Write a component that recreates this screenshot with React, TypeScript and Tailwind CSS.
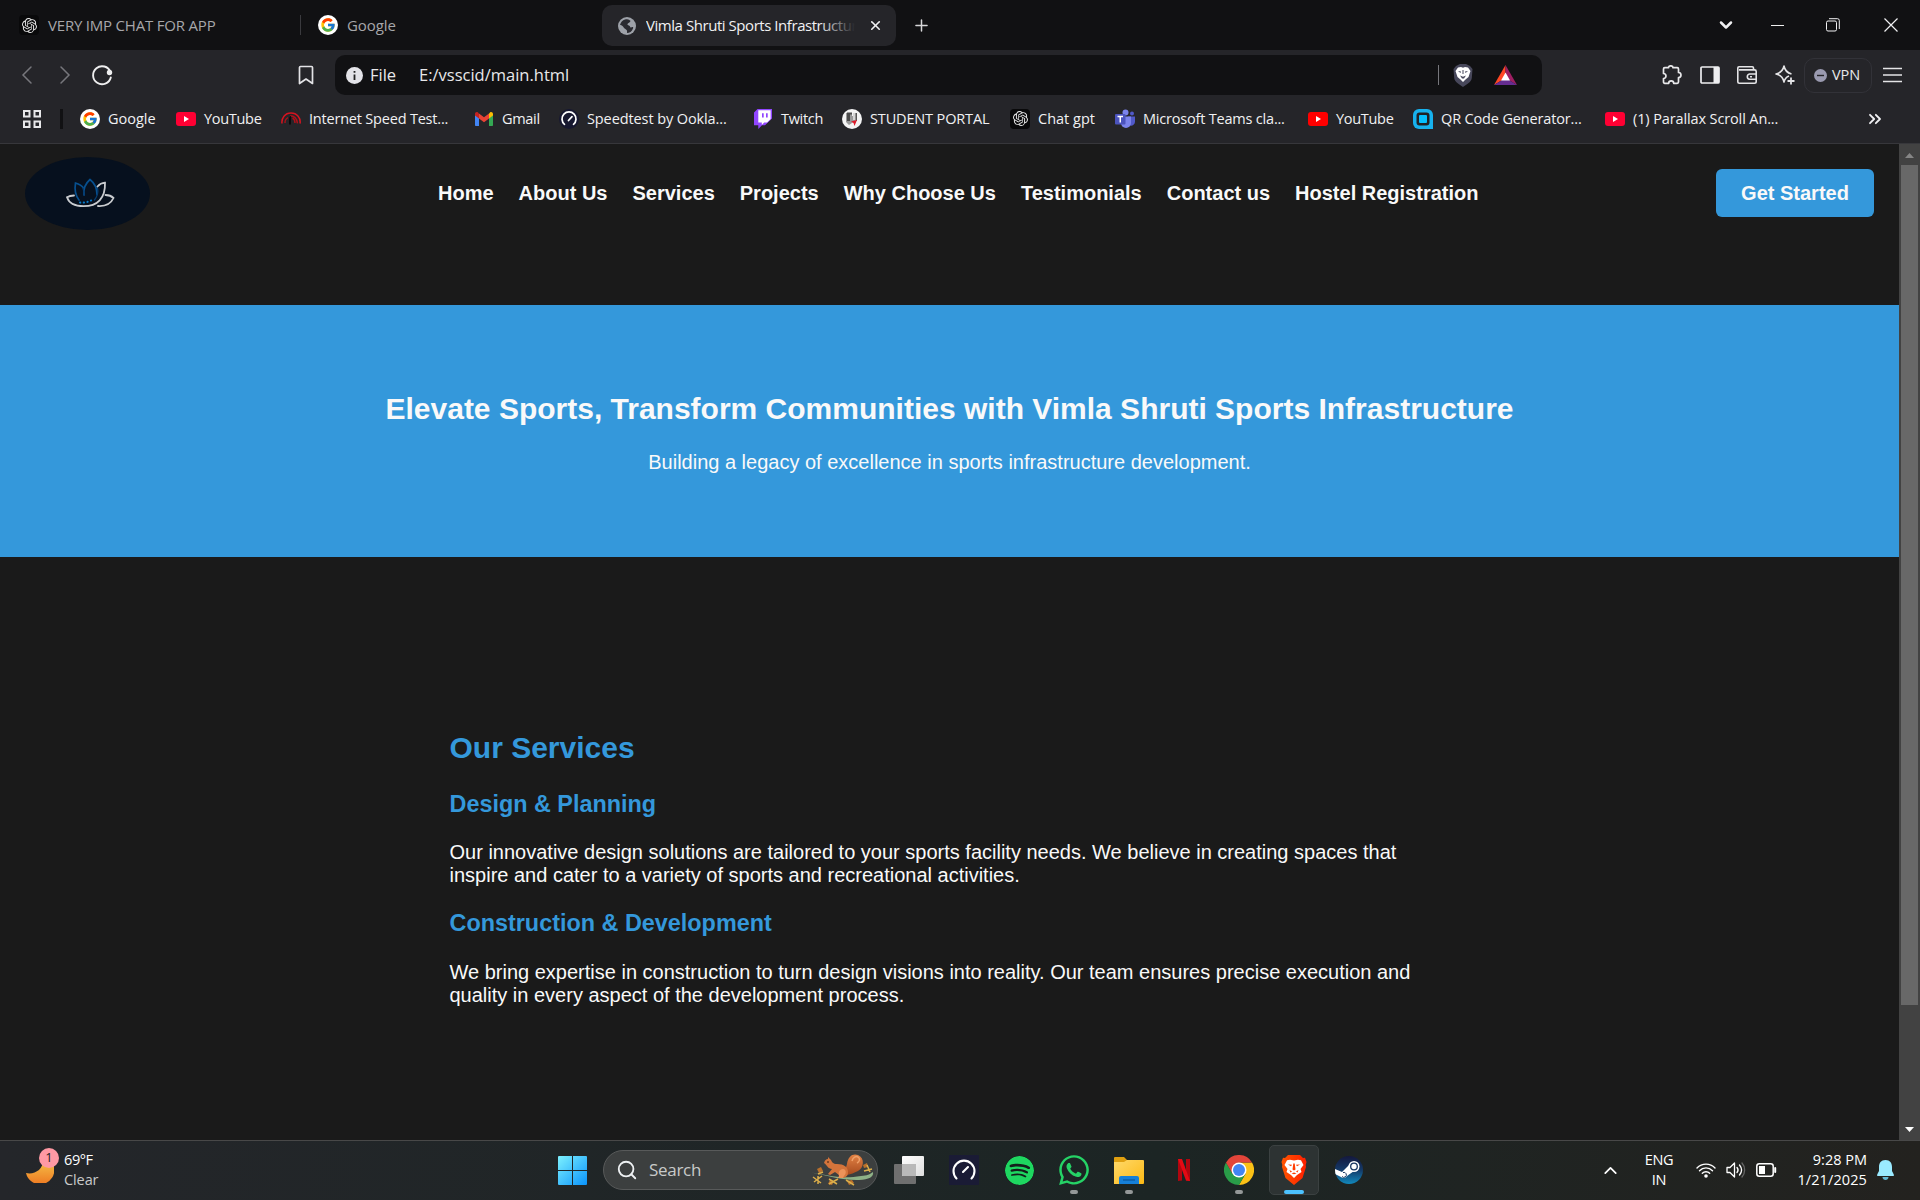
import React from "react";
import { FcGoogle } from "react-icons/fc";
import { SiOpenai, SiSpotify } from "react-icons/si";
import { FaWhatsapp } from "react-icons/fa";
import { ChevronDown, ChevronUp, X, Plus, ChevronsRight, Search } from "lucide-react";

const Google = () => (
  <span className="flex size-5 items-center justify-center rounded-full bg-white"><FcGoogle size={16} /></span>
);
const YouTube = ({ color = "#ff0033" }: { color?: string }) => (
  <svg width="20" height="20" viewBox="0 0 20 20"><rect y="3" width="20" height="14" rx="3" fill={color} /><path d="M8 7v6l5-3z" fill="#fff" /></svg>
);
const SpeedRed = () => (
  <svg width="20" height="20" viewBox="0 0 20 20" fill="none">
    <path d="M1 14.500C.3 9 4 4 10 4s10 5 9 10.500" stroke="#d81420" strokeWidth="1.500" />
    <path d="M4 14a6 6 0 0 1 3-5.500M9 6.800c5 0 7 4 7.500 7.500M11.500 9c2 1 2.500 3 2.500 5" stroke="#b01019" strokeWidth="1.400" />
    <path d="M8 15.500V8.500l2-2v9z" fill="#0b0b0c" />
  </svg>
);
const Gmail = () => (
  <svg width="20" height="20" viewBox="0 0 20 20">
    <path d="M1 5v11c0 .6.400 1 1 1h3V8z" fill="#4285f4" />
    <path d="M19 5v11c0 .6-.400 1-1 1h-3V8z" fill="#34a853" />
    <path d="M15 4.500V9.500l4-3V5c0-1.900-2-2.500-3-1.600z" fill="#fbbc04" />
    <path d="M5 4.500v5l5 3.800 5-3.800v-5l-5 3.800z" fill="#ea4335" />
    <path d="M1 5v1.500l4 3v-5l-1-1C2.700 2.600 1 3.400 1 5z" fill="#c5221f" />
  </svg>
);
const Gauge = () => (
  <svg width="20" height="20" viewBox="0 0 20 20" fill="none" strokeLinecap="round">
    <circle cx="10" cy="10" r="10" fill="#171830" />
    <path d="M5.500 15.300a7 7 0 1 1 9 0" stroke="#fff" strokeWidth="1.700" />
    <path d="M9.500 11.500 13 7.700" stroke="#fff" strokeWidth="1.700" />
  </svg>
);
const Twitch = () => (
  <svg width="20" height="20" viewBox="0 0 20 20">
    <path d="M4.500 0 1 3.500v12.700h4.300V20L9 16.200h3L19 9.500V0z" fill="#9146ff" />
    <path d="M5.300 1.300v12.200h3.500v2.400l2.400-2.400h2.900l3.500-3.500V1.300z" fill="#fff" />
    <path d="M9 4.300h1.700v4.300H9zM13 4.300h1.700v4.300H13z" fill="#9146ff" />
  </svg>
);
const Student = () => (
  <svg width="20" height="20" viewBox="0 0 20 20">
    <circle cx="10" cy="10" r="10" fill="#f4f4f4" />
    <path d="M4 4h6v3h3v5l-6 4-3-3z" fill="#9a9a9a" />
    <path d="M5 3.500h5v2H8V12H5z" fill="#4b4b4b" /><path d="M11 4h3v7h-3z" fill="#d5d5d5" /><path d="M13.500 4h1.500v8h-1.500z" fill="#555" />
    <path d="m9 12.500 6-1.500-2.500 6-1-3z" fill="#dd1c2a" />
  </svg>
);
const OpenAi = () => (
  <span className="flex size-5 items-center justify-center rounded-[4px] bg-[#09090a] text-[#e6e6e6]"><SiOpenai size={15} /></span>
);
const Teams = () => (
  <svg width="20" height="20" viewBox="0 0 20 20">
    <circle cx="10.500" cy="3.500" r="3" fill="#7b83eb" /><circle cx="17" cy="4.500" r="2" fill="#5059c9" />
    <path d="M13 7.500h7v5a4 4 0 0 1-5 4z" fill="#5059c9" />
    <path d="M6 7.500h10V14a5 5 0 0 1-10 0z" fill="#7b83eb" />
    <rect y="5" width="10.500" height="10.500" rx="1" fill="#4b53bc" />
    <path d="M2.500 7.500h5.500M5.250 7.500v6" stroke="#fff" strokeWidth="1.500" />
  </svg>
);
const Qr = () => (
  <svg width="20" height="20" viewBox="0 0 20 20">
    <path d="M6 0h8a6 6 0 0 1 6 6v14H6a6 6 0 0 1-6-6V6a6 6 0 0 1 6-6z" fill="#17b2ee" />
    <rect x="3.500" y="3.500" width="13" height="13" rx="3" fill="#202226" />
    <rect x="6" y="6" width="8" height="8" rx="1" fill="#05c0ff" />
  </svg>
);

const bookmarks: [React.ReactNode, string, string][] = [
  [<Google />, "Google", "w-[96px] tracking-[0px]"],
  [<YouTube />, "YouTube", "w-[105px] tracking-[-0.3px]"],
  [<SpeedRed />, "Internet Speed Test...", "w-[193px] tracking-[-0.2px]"],
  [<Gmail />, "Gmail", "w-[85px] tracking-[-0.3px]"],
  [<Gauge />, "Speedtest by Ookla...", "w-[194px] tracking-[-0.1px]"],
  [<Twitch />, "Twitch", "w-[89px] tracking-[-0.3px]"],
  [<Student />, "STUDENT PORTAL", "w-[168px] tracking-[-0.15px]"],
  [<OpenAi />, "Chat gpt", "w-[105px] tracking-[0px]"],
  [<Teams />, "Microsoft Teams cla...", "w-[193px] tracking-[-0.2px]"],
  [<YouTube color="#ff0000" />, "YouTube", "w-[105px] tracking-[-0.3px]"],
  [<Qr />, "QR Code Generator...", "w-[192px] tracking-[-0.15px]"],
  [<YouTube />, "(1) Parallax Scroll An...", "w-[200px] tracking-[-0.12px]"],
];

const Globe = () => (
  <svg width="18" height="18" viewBox="0 0 18 18">
    <circle cx="9" cy="9" r="9" fill="#9da1a8" />
    <path d="M7 2.500c3-1 5 .500 5.500 1.500-.500 2-2.500 1.500-3 3-.500 1.300 2 1 2.500 2.500.300 1.500 1.500 1 2.500.500.500-.300 1 .500.500 1.500-1 3-3.500 4.500-6 4.500 0-2 .500-2.500-1-3.500S6 11 5 9.500 2.500 8 2 8c.500-2.500 2.500-5 5-5.500z" fill="#2a2a30" />
  </svg>
);

function Tabs() {
  return (
    <div className="flex h-[50px] shrink-0 items-center bg-[#111113] text-[15px] tracking-[-0.3px]">
      <div className="flex w-[300px] items-center gap-[9px] pl-[19px] text-[#a7a7aa]">
        <OpenAi />
        <span className="tracking-[-0.2px]">VERY IMP CHAT FOR APP</span>
      </div>
      <div className="h-5 w-px bg-[#3a3a3e]" />
      <div className="flex w-[301px] items-center gap-[9px] pl-[17px] text-[#a7a7aa]">
        <Google />
        <span className="tracking-[-0.1px]">Google</span>
      </div>
      <div className="mt-px flex h-[41px] w-[294px] items-center rounded-[10px] bg-[#252529] pl-4 text-[#f1f1f3]">
        <Globe />
        <div className="relative ml-[10px] w-[209px] overflow-hidden whitespace-nowrap tracking-[-0.45px]">
          Vimla Shruti Sports Infrastructure
          <div className="absolute inset-y-0 right-0 w-9 bg-linear-to-r from-transparent to-[#252529]" />
        </div>
        <X size={15} strokeWidth={2.6} className="ml-[13px]" />
      </div>
      <Plus size={19} strokeWidth={1.9} className="ml-[16px] text-[#d6d6d8]" />
      <div className="ml-auto flex items-center text-[#f0f0f2]">
        <ChevronDown size={20} strokeWidth={3} className="mr-[35px]" />
        <div className="mr-[42px] h-px w-[13px] bg-[#eeeeee]" />
        <svg width="14" height="14" viewBox="0 0 14 14" fill="none" stroke="currentColor" className="mr-[44px]">
          <rect x=".5" y="3" width="10" height="10" rx="1.500" /><path d="M3 .700h8.500a1.800 1.800 0 0 1 1.800 1.800v8.500" />
        </svg>
        <svg width="14" height="14" viewBox="0 0 14 14" stroke="currentColor" strokeWidth="1.200" className="mr-[22px]"><path d="m.5.5 13 13m0-13-13 13" /></svg>
      </div>
    </div>
  );
}

function Toolbar() {
  return (
    <div className="flex h-[50px] shrink-0 items-center bg-[#252529] text-[#e8e8ea]">
      <svg width="96" height="24" viewBox="0 0 96 24" fill="none" strokeLinecap="round" strokeWidth="1.500" className="ml-5">
        <path d="m11 4-8 8 8 8M41 4l8 8-8 8" stroke="#77777c" />
        <path d="M90.500 9a9 9 0 1 0 .300 5.500" stroke="#eeeeef" strokeWidth="1.900" /><circle cx="89.500" cy="9.500" r="2.700" fill="#eeeeef" />
      </svg>
      <svg width="16" height="20" viewBox="0 0 16 20" fill="none" stroke="#e3e3e6" strokeWidth="1.700" className="ml-[182px]">
        <path d="M1.500 2.500c0-.6.400-1 1-1h11c.6 0 1 .4 1 1v16L8 14l-6.500 4.500z" strokeLinejoin="round" />
      </svg>
      <div className="ml-[21px] flex h-10 w-[1207px] items-center rounded-[10px] bg-[#111113] pl-[11px] text-[16.500px]">
        <svg width="17" height="17" viewBox="0 0 17 17"><circle cx="8.500" cy="8.500" r="8.500" fill="#e3e3e8" /><path d="M8.500 4v1.800M8.500 7.500V13" stroke="#222" strokeWidth="1.800" /></svg>
        <span className="ml-[7px] w-[49px]">File</span>
        <span>E:/vsscid/main.html</span>
        <div className="ml-auto h-5 w-px bg-[#77777c]" />
        <svg width="20" height="23" viewBox="0 0 20 23" className="ml-[14px]">
          <path d="M3 2 7 0h6l4 2 2.500 3-.7 9c-.5 4-5 6.500-8.800 9-3.800-2.500-8.300-5-8.800-9L.5 5z" fill="#47475a" />
          <path d="M5 3.500 8 3l2 .700L12 3l3 .500L17.500 7l-2 6-3 2.500L10 18l-2.500-2.500-3-2.500-2-6z" fill="#fff" />
          <path d="m5 7 3 .5-.5 1.600zM15 7l-3 .5.500 1.600zM7 11.500l3 1.300 3-1.300-2 3H9zM9.500 6h1v4h-1z" fill="#47475a" />
        </svg>
        <svg width="23" height="20" viewBox="0 0 23 20" className="ml-[21px] mr-[25px]">
          <path d="M11.500 0 0 20l11.500-7z" fill="#ff4724" /><path d="M11.500 0 23 20l-11.500-7z" fill="#9e1f63" /><path d="m0 20 11.500-7L23 20z" fill="#662d91" />
          <path d="M11.500 7.500 16 15.500H7z" fill="#fff" />
        </svg>
      </div>
      <div className="ml-auto flex items-center">
        <svg width="20" height="20" viewBox="0 0 20 20" fill="none" stroke="currentColor" strokeWidth="1.700" strokeLinejoin="round">
          <path d="M1.500 4c0-.8.500-1.300 1.300-1.300h3.700c0-2.500 4.500-2.500 4.500 0h4.200c.8 0 1.300.5 1.300 1.300v3.500c3.300 0 3.300 5 0 5V17c0 .8-.5 1.300-1.300 1.300h-3.500c0-3.300-5-3.300-5 0H2.800c-.8 0-1.300-.5-1.300-1.300v-3.500c3.300 0 3.300-5 0-5z" />
        </svg>
        <svg width="20" height="18" viewBox="0 0 20 18" className="ml-[18px]"><rect x="1" y="1" width="18" height="16" rx="1" fill="none" stroke="#eeeef0" strokeWidth="1.700" /><path d="M13.500 1H19v16h-5.500z" fill="#eeeef0" /></svg>
        <svg width="20" height="18" viewBox="0 0 20 18" fill="none" stroke="#e4e4e6" strokeWidth="1.600" className="ml-[17px]">
          <path d="M16.500 4V2c0-.8-.5-1.200-1.200-1.200H2C1.300.8.8 1.300.8 2v13.500c0 1 .7 1.700 1.700 1.700h15c1 0 1.700-.7 1.700-1.700V5.500c0-1-.7-1.600-1.700-1.600H2" /><path d="M19 8h-6.500a2.700 2.700 0 0 0 0 5.300H19M13 10.700h2" />
        </svg>
        <svg width="20" height="20" viewBox="0 0 20 20" fill="none" stroke="#e4e4e6" strokeWidth="1.600" strokeLinejoin="round" className="ml-[18px]">
          <path d="M14 11c-2.800 1-4.300 3-5 6-1-5-3-7-8-8 5-1.200 7-3.500 8-8 .8 4.500 3 6.800 7.500 8" /><path d="M16 12.500v7M12.500 16h7" strokeWidth="1.800" />
        </svg>
        <div className="ml-[9px] flex h-[35px] w-[68px] items-center rounded-[10px] border border-[#323238] pl-[9px] text-[14.500px] tracking-[-0.1px]">
          <svg width="13" height="13" viewBox="0 0 13 13"><circle cx="6.500" cy="6.500" r="6.500" fill="#9a9ab0" /><path d="M3 6.500h7" stroke="#252529" strokeWidth="1.400" /></svg>
          <span className="ml-[5px]">VPN</span>
        </div>
        <svg width="19" height="16" viewBox="0 0 19 16" stroke="#e4e4e6" strokeWidth="1.600" className="ml-[11px] mr-[18px]"><path d="M0 1.500h19M0 8h19M0 14.500h19" /></svg>
      </div>
    </div>
  );
}

function Bookmarks() {
  return (
    <div className="flex h-[44px] shrink-0 items-center border-b border-[#37373b] bg-[#252529] pb-[6px] text-[14.500px] text-[#f1f1f3]">
      <svg width="18" height="18" viewBox="0 0 18 18" fill="none" stroke="#e8e8ea" strokeWidth="2" className="ml-[23px]"><path d="M1 1h5.500v5.500H1zM11.500 1H17v5.500h-5.500zM1 11.500h5.500V17H1zM11.500 11.500H17V17h-5.500z" /></svg>
      <div className="ml-[19px] mr-[17px] h-5 w-[3px] bg-[#111113]" />
      {bookmarks.map(([icon, label, style], i) => (
        <div key={i} className={`flex shrink-0 items-center gap-2 whitespace-nowrap ${style}`}>
          <span className="size-5 shrink-0">{icon}</span>
          {label}
        </div>
      ))}
      <ChevronsRight size={20} strokeWidth={2.2} className="ml-auto mr-[35px] shrink-0" />
    </div>
  );
}

const Logo = () => (
  <svg width="125" height="73" viewBox="0 0 125 73" fill="none" strokeLinecap="round">
    <ellipse cx="62.500" cy="36.500" rx="62.500" ry="36.500" fill="#06101e" />
    <path d="M54 43c-4-5-4.500-11-3.500-17 3.500 1 6 2 8 5M59 38c-1-7 2-12 6-15.500 5 4 7 9 7 15" stroke="#07508f" strokeWidth="1.700" />
    <path d="M59 38c0-3-.3-5-1-7M72.500 31c1 4 0 8-3 12" stroke="#063c70" strokeWidth="1.300" />
    <path d="M55 45.500c4 .6 8-.3 13-3" stroke="#0879c8" strokeWidth="2" strokeDasharray=".3 3.500" />
    <path d="M49 38.500c-3 0-5.500.8-7 1.700 2 6 8.500 9 16.500 9 14 0 22-8 21.500-23.500-3 .3-5.500 1.500-7.500 3.800M80.500 38c3 0 6 1 8 3-2.500 5.500-7.500 8.500-15.500 8" stroke="#c9ccd0" strokeWidth="1.800" />
  </svg>
);

const links = ["Home", "About Us", "Services", "Projects", "Why Choose Us", "Testimonials", "Contact us", "Hostel Registration"];

function Site() {
  return (
    <div className="flex h-[996px] shrink-0 bg-[#1a1a1a] font-['Liberation_Sans',Arial,sans-serif] text-[20px] leading-[23px] text-[#f9f9f9]">
      <div className="flex flex-1 flex-col">
        <header className="flex h-[161px] items-start pl-[25px] pr-[25px] pt-[13px]">
          <Logo />
          <nav className="ml-[288px] mt-[25px] flex gap-[25px] font-bold">
            {links.map((l) => <a key={l}>{l}</a>)}
          </nav>
          <button className="ml-auto mt-3 h-12 w-[158px] rounded-[6px] bg-[#3498db] font-bold">Get Started</button>
        </header>
        <section className="flex h-[252px] flex-col items-center bg-[#3498db] pt-[86px]">
          <h1 className="text-[30px] leading-9 font-bold">Elevate Sports, Transform Communities with Vimla Shruti Sports Infrastructure</h1>
          <p className="mt-[24px]">Building a legacy of excellence in sports infrastructure development.</p>
        </section>
        <section className="mx-auto mt-[173px] w-[1000px]">
          <h2 className="text-[30px] leading-9 font-bold text-[#3498db]">Our Services</h2>
          <h3 className="mt-[24px] text-[23.4px] leading-[28px] font-bold text-[#3498db]">Design &amp; Planning</h3>
          <p className="mt-[23px]">Our innovative design solutions are tailored to your sports facility needs. We believe in creating spaces that inspire and cater to a variety of sports and recreational activities.</p>
          <h3 className="mt-[22px] text-[23.4px] leading-[28px] font-bold text-[#3498db]">Construction &amp; Development</h3>
          <p className="mt-[24px]">We bring expertise in construction to turn design visions into reality. Our team ensures precise execution and quality in every aspect of the development process.</p>
        </section>
      </div>
      <div className="flex w-[21px] flex-col items-center bg-[#424242]">
        <svg width="9" height="5" viewBox="0 0 9 5" className="mt-[9px]"><path d="m0 5 4.500-5L9 5z" fill="#868686" /></svg>
        <div className="mt-[7px] h-[840px] w-[17px] bg-[#686868]" />
        <svg width="9" height="5" viewBox="0 0 9 5" className="mt-auto mb-2"><path d="m0 0 4.500 5L9 0z" fill="#fff" /></svg>
      </div>
    </div>
  );
}

const Squirrel = () => (
  <svg width="64" height="34" viewBox="0 0 64 34">
    <defs>
      <linearGradient id="fur" x1="0" y1="0" x2="0" y2="1"><stop stopColor="#e28245" /><stop offset="1" stopColor="#a84b1e" /></linearGradient>
    </defs>
    <path d="M1 19.500c16 2.500 30 7 50 3.500 6-.5 9-1.500 12-4 1 5-4 7.500-14 8-17 .5-30-4-48-7.500z" fill="#8fb287" />
    <path d="M7 16l4-2 2 4-4 2zM20 27l4 1-2 4-4-1zM37 28l5-1 2 3-5 2zM53 12l4-2 1 4-4 1z" fill="#b9702c" />
    <path d="M3 24l8 6M4 29l8-6M8 23v8M19 26l8 5M19 31l9-5M36 27l8 5M54 18l8-2M57 12l3 7M8 21l5-2" stroke="#dcae4a" strokeWidth="1.500" />
    <path d="M37 22c-3-5-1-7 0-11 1-8 6-11 11-9 7 3 6 13 0 16-4 2-7 3-11 4z" fill="url(#fur)" />
    <path d="M42 8c1-4 4-5 6-4 3 2 1 5-1 6" fill="none" stroke="#f0a169" strokeWidth="1.500" />
    <path d="M14 10c1-3 2-4 4-4l0-2 3 3c1 2 2 4 6 4 7 0 11 3 11 8 0 4-2 6-8 6l-1-3-4-3-5 3-2-1 4-5c-4 0-5-4-8-6z" fill="#d4743b" />
    <circle cx="18" cy="9" r=".8" fill="#2b1408" />
    <path d="M29 23c-1-4 1-7 4-7s4 4 1 7l-1 2h-5z" fill="#ec935a" />
  </svg>
);

const Chrome = () => (
  <svg width="30" height="30" viewBox="0 0 30 30">
    <path d="M15 7.500h13A15 15 0 0 1 15 30l6.500-11.200z" fill="#fbc116" />
    <path d="M8.500 18.800 2 7.500A15 15 0 0 0 15 30l6.500-11.200z" fill="#299c48" />
    <path d="M15 7.500h13A15 15 0 0 0 2 7.500l6.500 11.300z" fill="#e2453a" />
    <circle cx="15" cy="15" r="7.500" fill="#fff" /><circle cx="15" cy="15" r="6" fill="#4285f4" />
  </svg>
);

const apps: { icon: React.ReactNode; state?: "open" | "active" }[] = [
  { icon: (
    <svg width="30" height="28" viewBox="0 0 30 28">
      <defs><linearGradient id="pane" x1="0" y1="0" x2="1" y2="1"><stop stopColor="#ffffff" /><stop offset="1" stopColor="#dedede" /></linearGradient></defs>
      <rect y="8" width="22" height="20" rx="1" fill="#6f6f6f" /><rect x="8" width="22" height="20" rx="1" fill="url(#pane)" /><path d="M8 8h14v12H9a1 1 0 0 1-1-1z" fill="#b9b9b9" />
    </svg>) },
  { icon: <svg width="30" height="30" viewBox="0 0 30 30" fill="none" strokeLinecap="round"><rect width="30" height="30" rx="1" fill="#1a1b35" /><path d="M7.500 23.500a10.500 10.500 0 1 1 15 0M14 17l5-5" stroke="#fff" strokeWidth="2.100" /></svg> },
  { icon: <SiSpotify size={29} color="#1ed760" className="rounded-full bg-[#14201c]" /> },
  { icon: <FaWhatsapp size={34} color="#25d366" />, state: "open" },
  { icon: (
    <svg width="30" height="27" viewBox="0 0 30 27">
      <defs><linearGradient id="fold" x1="0" y1="0" x2="1" y2="1"><stop stopColor="#ffd96a" /><stop offset="1" stopColor="#fcb914" /></linearGradient></defs>
      <path d="M1 0h9l3 3v5H0V1a1 1 0 0 1 1-1z" fill="#e0a010" /><path d="M0 5h10l3-2h16a1 1 0 0 1 1 1v22a1 1 0 0 1-1 1H0z" fill="url(#fold)" />
      <path d="M7 19h16a2 2 0 0 1 2 2v6H5v-6a2 2 0 0 1 2-2z" fill="#1680d8" /><path d="M9 23h12" stroke="#0b559c" strokeWidth="1.200" />
    </svg>), state: "open" },
  { icon: <svg width="12" height="22" viewBox="0 0 12 22"><path d="M0 0h4v21.500L0 22zM8 0h4v22l-4-.5z" fill="#b1060f" /><path d="M0 0h4l8 22-4-.5z" fill="#e50914" /></svg> },
  { icon: <Chrome />, state: "open" },
  { icon: (
    <svg width="26" height="30" viewBox="0 0 26 30">
      <defs><linearGradient id="brv" x1="0" x2="1"><stop stopColor="#ff5500" /><stop offset="1" stopColor="#ff1e00" /></linearGradient></defs>
      <path d="M7 0h12l3 3 2-.3L25.500 7l-.8 3 .3 2-3.500 11-8.500 7-8.500-7L1 12l.3-2L.5 7 2 2.700 4 3z" fill="url(#brv)" />
      <path d="M13 5.500 9 4.800l-3 .5L3.500 10l3 4-1 3 4.500 3 3 3 3-3 4.500-3-1-3 3-4L20 5.300l-3-.5z" fill="#fff" />
      <path d="m7 9.500 4 .3-1 1.500zM19 9.500l-4 .3 1 1.500zM12.300 8.500h1.400l.8 6-1.500 1-1.500-1zM8.500 15l2.500 1.500-1.500 1zM17.500 15 15 16.500l1.500 1zM10.500 18.500l2.500-1 2.500 1-2.500.7z" fill="#ff3b00" />
    </svg>), state: "active" },
  { icon: (
    <svg width="28" height="28" viewBox="0 0 28 28">
      <defs><linearGradient id="stm" x1="0" y1="0" x2="0" y2="1"><stop stopColor="#14183d" /><stop offset=".5" stopColor="#143a68" /><stop offset="1" stopColor="#1189bd" /></linearGradient><clipPath id="disc"><circle cx="14" cy="14" r="14" /></clipPath></defs>
      <circle cx="14" cy="14" r="14" fill="url(#stm)" />
      <g clipPath="url(#disc)"><path d="m0 13 7 3 7-7 5 6-7 5a3.800 3.800 0 0 1-6 1l-6-3z" fill="#fff" /><circle cx="19" cy="10.500" r="5.500" fill="#fff" /><circle cx="19" cy="10.500" r="3.300" fill="#fff" stroke="#17345f" strokeWidth="1.300" /><path d="M7 20.500a2.500 2.500 0 1 0 1-4" fill="none" stroke="#17345f" /></g>
    </svg>) },
];

function Taskbar() {
  return (
    <div className="flex h-[60px] shrink-0 border-t border-[#484848] bg-linear-to-r from-[#24262a] via-[#1c2524] via-60% to-[#23221f] text-white">
      <div className="flex w-[557px] items-start">
        <div className="relative ml-[26px] mt-2 h-[36px] w-[33px]">
          <svg width="28" height="28" viewBox="0 0 28 28" className="mt-[6px]"><defs><linearGradient id="moon" x1="0" y1="0" x2="0" y2="1"><stop stopColor="#f6c74c" /><stop offset="1" stopColor="#ee7a22" /></linearGradient></defs><path d="M19 4c4-2 9 1 9 8a14 14 0 0 1-28 6c9 2 18-4 17-14z" fill="url(#moon)" /></svg>
          <div className="absolute -top-px right-0 flex size-5 items-center justify-center rounded-full bg-[#ff99a4] text-[13px] text-[#1d1d1d]">1</div>
        </div>
        <div className="ml-[5px] mt-[9px] text-[14.500px] leading-5 tracking-[-0.4px]">
          <div>69°F</div>
          <div className="tracking-[-0.1px] text-[#c9caca]">Clear</div>
        </div>
      </div>
      <svg width="30" height="30" viewBox="0 0 30 30" className="mt-[14px]"><defs><linearGradient id="win" x1="0" y1="0" x2="1" y2="1"><stop stopColor="#7df1fe" /><stop offset="1" stopColor="#0a93fb" /></linearGradient></defs><path d="M2 1h13v14H1V2a1 1 0 0 1 1-1zM16 1h13a1 1 0 0 1 1 1v13H16zM1 16h14v14H2a1 1 0 0 1-1-1zM16 16h14v13a1 1 0 0 1-1 1H16z" fill="url(#win)" /></svg>
      <div className="ml-4 mt-[9px] flex h-10 w-[275px] items-center rounded-full border border-[#585a5a] bg-[#3c3f3f] pl-[12px]">
        <Search size={22} strokeWidth={2} className="text-[#eef1f3]" />
        <span className="ml-[11px] text-[17px] tracking-[-0.3px] text-[#c8cac9]">Search</span>
        <div className="ml-auto mr-[3px]"><Squirrel /></div>
      </div>
      <div className="ml-[6px] mt-[4px] flex gap-[5px]">
        {apps.map((a, i) => (
          <div key={i} className={a.state === "active" ? "flex h-[50px] w-[50px] flex-col items-center rounded-[5px] border border-[#3b4141] bg-[#2d3333]" : "flex h-[50px] w-[50px] flex-col items-center border border-transparent"}>
            <div className="mt-[5px] flex h-[38px] items-center">{a.icon}</div>
            {a.state === "open" && <div className="mt-[1px] h-1 w-2 shrink-0 rounded-full bg-[#949898]" />}
            {a.state === "active" && <div className="mt-[1px] h-1 w-5 shrink-0 rounded-full bg-[#4cc2ff]" />}
          </div>
        ))}
      </div>
      <div className="ml-auto flex items-center pb-px text-[14.500px] leading-5 tracking-[-0.3px]">
        <ChevronUp size={21} strokeWidth={2} className="mr-[22px]" />
        <div className="w-[32px] text-center">ENG<br />IN</div>
        <svg width="20" height="16" viewBox="0 0 20 16" fill="none" stroke="#fff" strokeWidth="1.400" strokeLinecap="round" className="ml-[21px]"><path d="M1 6a12.500 12.500 0 0 1 18 0M3.500 8.700a9 9 0 0 1 13 0M6.300 11.300a5.300 5.300 0 0 1 7.400 0" /><circle cx="10" cy="14" r="1.800" fill="#fff" stroke="none" /></svg>
        <svg width="20" height="18" viewBox="0 0 20 18" fill="none" stroke="#fff" strokeWidth="1.300" strokeLinecap="round" strokeLinejoin="round" className="ml-[10px]"><path d="M1 6.500h3L8.500 2v14L4 11.500H1zM11 6.500c1.300 1.500 1.300 3.500 0 5M13.500 4c2.500 3 2.500 7 0 10" /><path d="M16 2c3.500 4 3.500 10 0 14" stroke="#666" /></svg>
        <svg width="21" height="14" viewBox="0 0 21 14" fill="none" stroke="#fff" strokeWidth="1.500" className="ml-[10px]"><rect x=".8" y=".8" width="16.400" height="12.400" rx="2.500" /><path d="M3 3h6v8H3z" fill="#fff" stroke="none" /><path d="M19.200 5v4" strokeWidth="2" strokeLinecap="round" /></svg>
        <div className="ml-[10px] flex w-[80px] flex-col items-end whitespace-nowrap pb-px">
          <span className="tracking-[0px]">9:28 PM</span>
          <span className="tracking-[0.1px]">1/21/2025</span>
        </div>
        <svg width="17" height="20" viewBox="0 0 17 20" className="ml-[10px] mr-[26px]"><path d="M8.500 0C4 0 2 3 2 7v4L.2 14.500V16h16.600v-1.500L15 11V7c0-4-2-7-6.500-7z" fill="#9aeaff" /><path d="M5.500 17h6c0 4-6 4-6 0z" fill="#62b7d4" /></svg>
      </div>
    </div>
  );
}

export default function App() {
  return (
    <div className="flex h-[1200px] w-[1920px] flex-col overflow-hidden bg-[#1a1a1a] font-['Open_Sans','Noto_Sans',sans-serif]">
      <Tabs />
      <Toolbar />
      <Bookmarks />
      <Site />
      <Taskbar />
    </div>
  );
}
